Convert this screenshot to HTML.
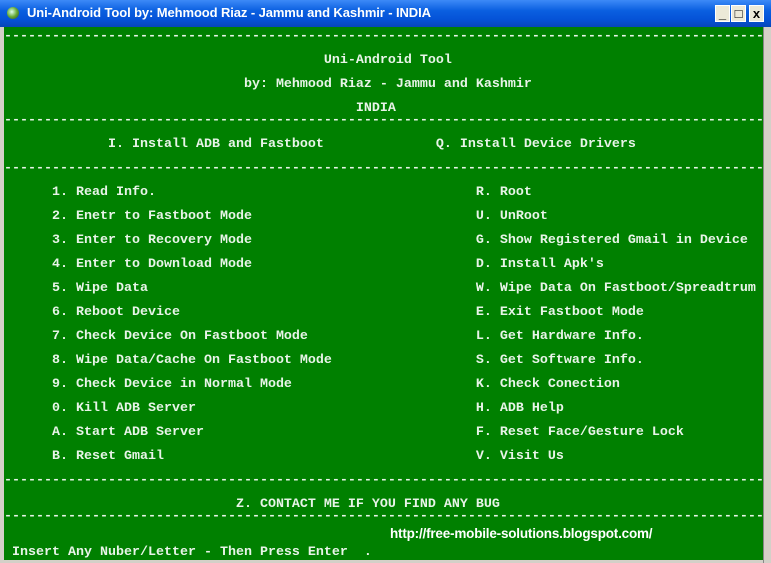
<!DOCTYPE html>
<html><head><meta charset="utf-8"><style>
*{margin:0;padding:0}
html,body{width:771px;height:563px;overflow:hidden;background:#d4d0c8;position:relative}
#tb{position:absolute;left:0;top:0;width:771px;height:27px;background:linear-gradient(#3d8af7,#0a5fe0 40%,#0553d8 70%,#0646b8);}
#tt{position:absolute;left:27px;top:5px;color:#fff;font:bold 13px "Liberation Sans",sans-serif;letter-spacing:-0.1px;white-space:nowrap}
#ic{position:absolute;left:7px;top:7px;width:12px;height:12px;border-radius:50%;background:radial-gradient(circle at 40% 40%,#dfe,#6a3 50%,#243);}
.b{position:absolute;top:5px;width:15px;height:17px;background:#ece9d8;border:1px solid #fff;box-sizing:border-box;font:bold 13px "Liberation Sans",sans-serif;text-align:center;line-height:15px;color:#000}
#con{position:absolute;left:4px;top:27px;width:759px;height:533px;background:#008000;overflow:hidden}
#rb{position:absolute;left:763px;top:27px;width:8px;height:536px;background:#d4d0c8;border-left:1px solid #888}
.r{position:absolute;left:0;height:12px;line-height:12px;white-space:pre;font:bold 13.33px "Liberation Mono",monospace;color:#e8f4e8}
#url{position:absolute;left:390px;top:526px;color:#fff;font:bold 13.5px "Liberation Sans",sans-serif;letter-spacing:-0.2px}
</style></head><body>
<div id="tb"><div id="ic"></div><div id="tt">Uni-Android Tool by: Mehmood Riaz - Jammu and Kashmir - INDIA</div>
<div class="b" style="left:715px">_</div><div class="b" style="left:731px">□</div><div class="b" style="left:749px">x</div></div>
<div id="rb"></div>
<div id="con">
<div class="r" style="top:2px">------------------------------------------------------------------------------------------------</div>
<div class="r" style="top:26px">                                        Uni-Android Tool</div>
<div class="r" style="top:50px">                              by: Mehmood Riaz - Jammu and Kashmir</div>
<div class="r" style="top:74px">                                            INDIA</div>
<div class="r" style="top:86px">------------------------------------------------------------------------------------------------</div>
<div class="r" style="top:110px">             I. Install ADB and Fastboot              Q. Install Device Drivers</div>
<div class="r" style="top:134px">------------------------------------------------------------------------------------------------</div>
<div class="r" style="top:158px">      1. Read Info.                                        R. Root</div>
<div class="r" style="top:182px">      2. Enetr to Fastboot Mode                            U. UnRoot</div>
<div class="r" style="top:206px">      3. Enter to Recovery Mode                            G. Show Registered Gmail in Device</div>
<div class="r" style="top:230px">      4. Enter to Download Mode                            D. Install Apk's</div>
<div class="r" style="top:254px">      5. Wipe Data                                         W. Wipe Data On Fastboot/Spreadtrum</div>
<div class="r" style="top:278px">      6. Reboot Device                                     E. Exit Fastboot Mode</div>
<div class="r" style="top:302px">      7. Check Device On Fastboot Mode                     L. Get Hardware Info.</div>
<div class="r" style="top:326px">      8. Wipe Data/Cache On Fastboot Mode                  S. Get Software Info.</div>
<div class="r" style="top:350px">      9. Check Device in Normal Mode                       K. Check Conection</div>
<div class="r" style="top:374px">      0. Kill ADB Server                                   H. ADB Help</div>
<div class="r" style="top:398px">      A. Start ADB Server                                  F. Reset Face/Gesture Lock</div>
<div class="r" style="top:422px">      B. Reset Gmail                                       V. Visit Us</div>
<div class="r" style="top:446px">------------------------------------------------------------------------------------------------</div>
<div class="r" style="top:470px">                             Z. CONTACT ME IF YOU FIND ANY BUG</div>
<div class="r" style="top:482px">------------------------------------------------------------------------------------------------</div>
<div class="r" style="top:518px"> Insert Any Nuber/Letter - Then Press Enter  .</div>
</div>
<div id="url">http://free-mobile-solutions.blogspot.com/</div>
</body></html>
